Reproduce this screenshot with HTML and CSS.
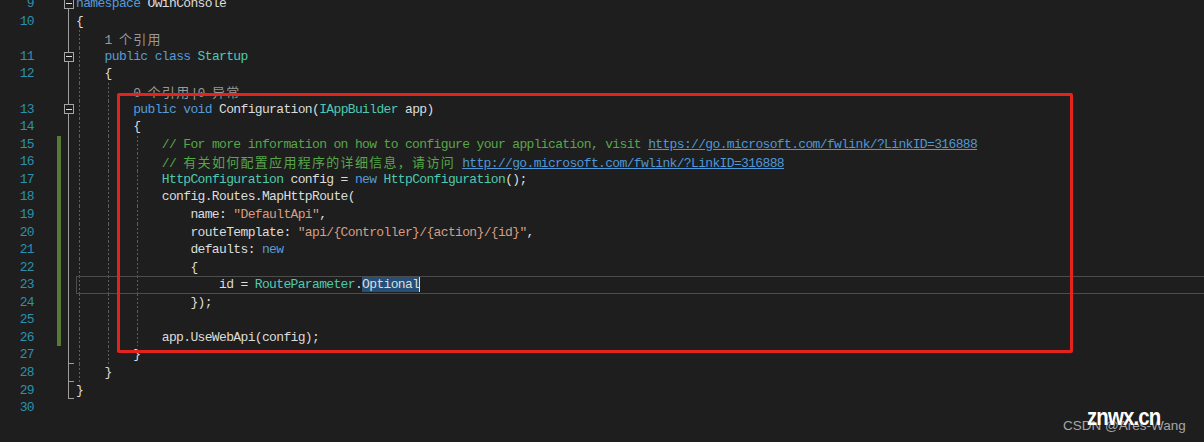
FILE: index.html
```html
<!DOCTYPE html>
<html>
<head>
  <title>Startup.cs</title>
  <link rel="stylesheet" href="styles.css">
</head>
<body>
  <div class="editor">
    <div class="row"><span class="num">9</span><span class="chg"></span><span class="fold f-first"><i class="box"></i></span><span class="code"><span class="kw">namespace</span> OwinConsole</span></div>
    <div class="row"><span class="num">10</span><span class="chg"></span><span class="fold f-line"></span><span class="code">{</span></div>
    <div class="row g1"><span class="num"></span><span class="chg"></span><span class="fold f-line"></span><span class="code">    <span class="lens">1 <span class="cjk">个引用</span></span></span></div>
    <div class="row g1"><span class="num">11</span><span class="chg"></span><span class="fold f-line"><i class="box"></i></span><span class="code">    <span class="kw">public</span> <span class="kw">class</span> <span class="ty">Startup</span></span></div>
    <div class="row g1"><span class="num">12</span><span class="chg"></span><span class="fold f-line"></span><span class="code">    {</span></div>
    <div class="row g2"><span class="num"></span><span class="chg"></span><span class="fold f-line"></span><span class="code">        <span class="lens">0 <span class="cjk">个引用</span>|0 <span class="cjk">异常</span></span></span></div>
    <div class="row g2"><span class="num">13</span><span class="chg"></span><span class="fold f-line"><i class="box"></i></span><span class="code">        <span class="kw">public</span> <span class="kw">void</span> Configuration(<span class="ty">IAppBuilder</span> app)</span></div>
    <div class="row g2"><span class="num">14</span><span class="chg"></span><span class="fold f-line"></span><span class="code">        {</span></div>
    <div class="row g3"><span class="num">15</span><span class="chg mod"></span><span class="fold f-line"></span><span class="code">            <span class="cm">// For more information on how to configure your application, visit <span class="link">https://go.microsoft.com/fwlink/?LinkID=316888</span></span></span></div>
    <div class="row g3"><span class="num">16</span><span class="chg mod"></span><span class="fold f-line"></span><span class="code">            <span class="cm">// <span class="cjk">有关如何配置应用程序的详细信息，请访问</span> <span class="link">http://go.microsoft.com/fwlink/?LinkID=316888</span></span></span></div>
    <div class="row g3"><span class="num">17</span><span class="chg mod"></span><span class="fold f-line"></span><span class="code">            <span class="ty">HttpConfiguration</span> config = <span class="kw">new</span> <span class="ty">HttpConfiguration</span>();</span></div>
    <div class="row g3"><span class="num">18</span><span class="chg mod"></span><span class="fold f-line"></span><span class="code">            config.Routes.MapHttpRoute(</span></div>
    <div class="row g3"><span class="num">19</span><span class="chg mod"></span><span class="fold f-line"></span><span class="code">                name: <span class="st">"DefaultApi"</span>,</span></div>
    <div class="row g3"><span class="num">20</span><span class="chg mod"></span><span class="fold f-line"></span><span class="code">                routeTemplate: <span class="st">"api/{Controller}/{action}/{id}"</span>,</span></div>
    <div class="row g3"><span class="num">21</span><span class="chg mod"></span><span class="fold f-line"></span><span class="code">                defaults: <span class="kw">new</span></span></div>
    <div class="row g3"><span class="num">22</span><span class="chg mod"></span><span class="fold f-line"></span><span class="code">                {</span></div>
    <div class="row g3 current"><span class="num">23</span><span class="chg mod"></span><span class="fold f-line"></span><span class="code">                    id = <span class="ty">RouteParameter</span>.<span class="sel">Optional</span></span></div>
    <div class="row g3"><span class="num">24</span><span class="chg mod"></span><span class="fold f-line"></span><span class="code">                });</span></div>
    <div class="row g3"><span class="num">25</span><span class="chg mod"></span><span class="fold f-line"></span><span class="code"></span></div>
    <div class="row g3"><span class="num">26</span><span class="chg mod"></span><span class="fold f-line"></span><span class="code">            app.UseWebApi(config);</span></div>
    <div class="row g2"><span class="num">27</span><span class="chg"></span><span class="fold f-tick"></span><span class="code">        }</span></div>
    <div class="row g1"><span class="num">28</span><span class="chg"></span><span class="fold f-tick"></span><span class="code">    }</span></div>
    <div class="row"><span class="num">29</span><span class="chg"></span><span class="fold f-tick"></span><span class="code">}</span></div>
    <div class="row"><span class="num">30</span><span class="chg"></span><span class="fold"></span><span class="code"></span></div>
  </div>

  <!-- annotation drawn on top of the screenshot -->
  <div class="mark"></div>

  <div class="wm-csdn">CSDN @Ares-Wang</div>
  <div class="wm-site">znwx.cn</div>
</body>
</html>
```
FILE: styles.css
```css
body {
  margin: 0;
  height: 442px;
  overflow: hidden;
  background-color: #1e1e1e;
  color: #dcdcdc;
  font-family: "Liberation Mono", "DejaVu Sans Mono", monospace;
  font-size: 13px;
  letter-spacing: -0.65px; /* 7.15px por caractere */
  position: relative;
}
.editor {
  margin-top: -4.8px;
}
.row {
  display: grid;
  grid-template-columns: 34px 23px 4px 3px 10px 2px 1fr;
  height: 17.57px;
  line-height: 17.57px;
}
.num {
  grid-column: 1;
  text-align: right;
  color: #2b91af;
}
.chg {
  grid-column: 3;
}
.chg.mod {
  background-color: #587a37;
}

/* linhas de outlining */
.fold {
  --fc: #9e9e9e;
  grid-column: 5;
  display: flex;
  align-items: center;
  background-repeat: no-repeat;
}
.f-line {
  background-image: linear-gradient(var(--fc), var(--fc));
  background-position: 4px 0;
  background-size: 1px 100%;
}
.f-first {
  background-image: linear-gradient(var(--fc), var(--fc));
  background-position: 4px 100%;
  background-size: 1px 50%;
}
.f-tick {
  background-image: linear-gradient(var(--fc), var(--fc)), linear-gradient(var(--fc), var(--fc));
  background-position: 4px 0, 4px 100%;
  background-size: 1px 100%, 6px 1px;
}
.box {
  display: block;
  width: 10px;
  height: 10px;
  box-sizing: border-box;
  border: 1px solid #a5a5a5;
  background: #1e1e1e linear-gradient(#dcdcdc, #dcdcdc) no-repeat center / 6px 1px;
}

/* guias de indentação tracejadas */
.code {
  grid-column: 7;
  white-space: pre;
  overflow: hidden;
  --dash: repeating-linear-gradient(to bottom, #5e5e5e 0 2px, transparent 2px 4px);
  background-repeat: no-repeat;
  background-size: 1px 100%;
}
.g1 .code {
  background-image: var(--dash);
  background-position: 3px 0;
}
.g2 .code {
  background-image: var(--dash), var(--dash);
  background-position: 3px 0, 32px 0;
}
.g3 .code {
  background-image: var(--dash), var(--dash), var(--dash);
  background-position: 3px 0, 32px 0, 61px 0;
}
.current .code {
  box-shadow: inset 0 1px 0 #4c4c4c, inset 0 -1px 0 #4c4c4c, inset 1px 0 0 #4c4c4c;
}

.kw { color: #569cd6; }
.ty { color: #4ec9b0; }
.cm { color: #57a64a; }
.st { color: #d69d85; }
.lens { color: #999999; }
.link {
  color: #4f97d7;
  text-decoration: underline;
}
.cjk {
  font-family: "Noto Sans CJK SC", sans-serif;
  letter-spacing: 1.3px;
}
.sel {
  background-color: #264f78;
  box-shadow: 1px 0 0 #dcdcdc;
}

.mark {
  position: absolute;
  left: 117px;
  top: 93px;
  width: 956px;
  height: 260px;
  box-sizing: border-box;
  border: 3px solid #e4221f;
  border-radius: 2px;
}
.wm-csdn {
  position: absolute;
  left: 1063px;
  top: 419px;
  font-family: "Liberation Sans", Arial, sans-serif;
  font-size: 13.5px;
  line-height: 1;
  letter-spacing: 0;
  color: #a6a6a6;
}
.wm-site {
  position: absolute;
  left: 1087px;
  top: 405px;
  font-family: "Liberation Sans", Arial, sans-serif;
  font-weight: bold;
  font-size: 24px;
  line-height: 1;
  letter-spacing: -1px;
  color: #ffffff;
  transform: scaleX(0.85);
  transform-origin: left top;
}
```
